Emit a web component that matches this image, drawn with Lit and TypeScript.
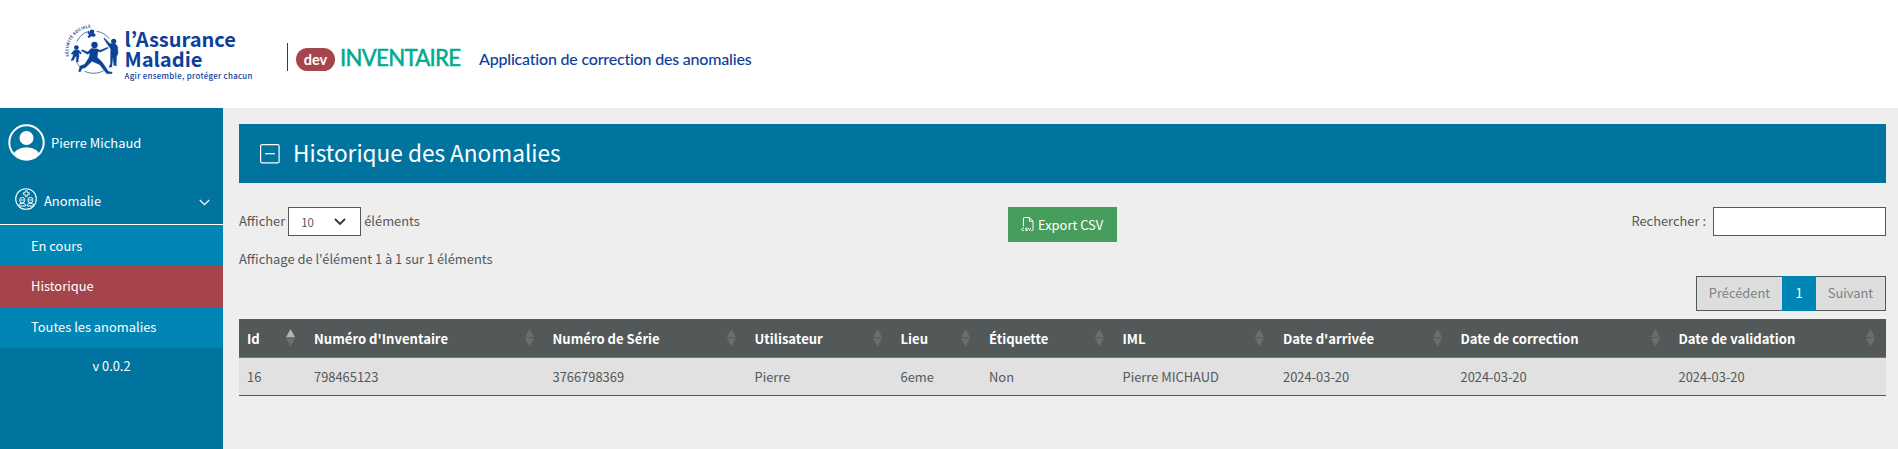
import { LitElement, html, css, svg } from "lit";
import { customElement } from "lit/decorators.js";
import { classMap } from "lit/directives/class-map.js";

const columns = [
  { label: "Id", value: "16", sorted: true },
  { label: "Numéro d'Inventaire", value: "798465123" },
  { label: "Numéro de Série", value: "3766798369" },
  { label: "Utilisateur", value: "Pierre" },
  { label: "Lieu", value: "6eme" },
  { label: "Étiquette", value: "Non" },
  { label: "IML", value: "Pierre MICHAUD" },
  { label: "Date d'arrivée", value: "2024-03-20" },
  { label: "Date de correction", value: "2024-03-20" },
  { label: "Date de validation", value: "2024-03-20" },
];

const entries = ["En cours", "Historique", "Toutes les anomalies"];

const logo = html`<svg class="logo" width="210" height="70" viewBox="60 18 210 70">
  ${svg`
  <defs><path id="arc" d="M69 56.500A23.500 23.500 0 0 1 96 28"/></defs>
  <g fill="#0c419a" font-family="Noto Sans CJK JP, sans-serif">
    <text font-size="3.900" font-weight="700"><textPath href="#arc" textLength="41">SÉCURITÉ SOCIALE</textPath></text>
    <text x="124.500" y="47.300" font-size="19.800" font-weight="700" textLength="111.500" lengthAdjust="spacingAndGlyphs">l’Assurance</text>
    <text x="124.500" y="66.700" font-size="19.800" font-weight="700" textLength="78" lengthAdjust="spacingAndGlyphs">Maladie</text>
    <text x="124.500" y="79" font-size="7.900" font-weight="500" textLength="128">Agir ensemble, protéger chacun</text>
  </g>
  <g fill="#0c419a" transform="translate(1.200 0)">
    <circle cx="90.800" cy="31.800" r="2.300"/>
    <path d="M87.300 30.800l2 2.700 3.400-.3 1.800 1.700-1.600 1.800-2.800-.6-2.300 1.900-1.200-1.200 1.400-2-1.800-2.600z" stroke="#0c419a" stroke-width=".4"/>
    <circle cx="93.300" cy="45" r="3.200"/>
    <path d="M90 48.500l5.400.2 3.600 1.500 7.600-3 .4 1.100-7.600 3.700-2.600-.4-.8 5.600 5 5 6.200 9.300 3.800.8-.4 1.400-5.200-.2-6.800-8.800-7.800-3.400-6.400 6.300-3.600 1-1.800 3.400-1.500-.6 1.300-5.400 4.800-1.800 4.200-6.600 1-4.600-2.600 1.200-6-3.500.7-1 5.600 2.200z" stroke="#0c419a" stroke-width=".4"/>
    <circle cx="112.500" cy="41.300" r="2.600"/>
    <path d="M103.200 38l5.400 5.400 5.800.6 2 2.600.4 7-1.400 2.600-.5 8 .8 1.400h-3l-.8-8.600-.9 6-.4 4-2.800.2 1.500-3.400.2-14.800-6.900-10.200z" stroke="#0c419a" stroke-width=".4"/>
    <circle cx="75.200" cy="47.600" r="2.400"/>
    <path d="M73 50.200l4.400-.2 2.800 3-.6 1.200-2-1.600.2 4-.8 3.600.2 1.600-2.200.2.400-5.400-1.400.2-1.800 3.400-2.400.4 2-4.400.6-3-1.500 1.400-.9-1z" stroke="#0c419a" stroke-width=".4"/>
  </g>
  <g fill="none" stroke="#0c419a" stroke-width=".7" transform="translate(1.200 0)">
    <path d="M75.500 41.500c2-4 6-8 10.500-9.700M95.500 31.300c5 .8 9.500 3.300 12.500 7.200M75.500 62.500c1.500 2.400 2.500 3.500 4.500 5.500M83.500 71.300c6 2.800 13 2.600 19-.6"/>
  </g>`}
</svg>`;

@customElement("app-root")
export class AppRoot extends LitElement {
  static styles = css`
    :host {
      display: flex;
      flex-direction: column;
      height: 100vh;
      overflow: hidden;
      background: #eee;
      color: #545859;
      font: 12.9px/20px "Noto Sans CJK JP", "Noto Sans CJK SC", sans-serif;
    }
    * { box-sizing: border-box; }
    svg { display: block; flex: none; }
    .header {
      display: flex;
      flex: 0 0 108px;
      background: #fff;
      padding-left: 60px;
      font-family: Lato, sans-serif;
      white-space: nowrap;
    }
    .logo { margin-top: 18px; }
    .brand {
      display: flex;
      height: 28px;
      margin: 43px 0 0 17px;
      border-left: 1px solid #0c419a;
      padding-left: 8px;
    }
    .dev {
      width: 39px;
      height: 23px;
      margin-top: 5px;
      border-radius: 12px;
      background: #a5454b;
      color: #fff;
      font: 700 14.5px/23px Lato, sans-serif;
      text-align: center;
    }
    .product {
      width: 139px;
      margin-left: 5px;
      color: #00ab8e;
      font-size: 22.2px;
      letter-spacing: -0.7px;
      -webkit-text-stroke: 0.5px #00ab8e;
      line-height: 29px;
    }
    .tagline {
      color: #0c419a;
      font-size: 16px;
      font-weight: 500;
      letter-spacing: -0.2px;
      line-height: 32px;
    }
    .body { display: flex; flex: 1; min-height: 0; }
    .side {
      flex: 0 0 223px;
      background: #00749f;
      color: #fff;
      font-size: 12.9px;
    }
    .user {
      display: flex;
      align-items: center;
      gap: 6px;
      height: 68px;
      padding-left: 8px;
    }
    .user span { padding-top: 2px; }
    .group {
      display: flex;
      align-items: center;
      height: 49px;
      padding: 0 13px 0 15px;
      border-bottom: 1px solid #fff;
    }
    .user, .group { white-space: nowrap; }
    .group span { flex: 1; padding: 2px 0 0 7px; }
    .group .people { margin-top: -2px; }
    .group .chevron { margin-top: 5px; }
    .entry {
      height: 41px;
      padding-left: 31px;
      background: #0086b5;
      line-height: 39px;
    }
    .entry:first-of-type { line-height: 41px; }
    .current { background: #a5454b; }
    .version { line-height: 35px; text-align: center; }
    .main { flex: 1; padding: 16px 12px 0 16px; min-width: 0; }
    .title {
      display: flex;
      align-items: center;
      gap: 13px;
      height: 59px;
      padding-left: 21px;
      background: #00749f;
      color: #fff;
      font-size: 22.6px;
      line-height: 56px;
    }
    .title span { padding-bottom: 2px; }
    .tools {
      display: grid;
      grid-template-columns: 769px 1fr auto;
      align-items: start;
      height: 35px;
      margin-top: 24px;
    }
    .length, .search { display: flex; align-items: center; height: 29px; gap: 3px; }
    .search { gap: 7px; }
    .length span, .search span { padding-bottom: 2px; }
    .select {
      display: flex;
      align-items: center;
      justify-content: space-between;
      width: 73px;
      height: 29px;
      padding: 0 14px 0 12px;
      border: 1px solid #545859;
      background: #fff;
      font-size: 11.4px;
    }
    .field {
      width: 173px;
      height: 29px;
      border: 1px solid #545859;
      border-radius: 0;
      padding: 0 8px;
      background: #fff;
    }
    .export {
      display: flex;
      align-items: center;
      justify-self: start;
      gap: 4px;
      width: 109px;
      height: 35px;
      padding-left: 13px;
      background: #479d5b;
      color: #fff;
      white-space: nowrap;
    }
    .info { height: 34px; line-height: 34px; }
    .pager {
      display: grid;
      grid-template-columns: 85px 34px 1fr;
      width: 190px;
      height: 35px;
      margin-left: auto;
      border: 1px solid #545859;
      background: #dcdedd;
      color: #7e8182;
      line-height: 32px;
      text-align: center;
    }
    .page { margin: -1px 0; background: #0086b5; color: #fff; line-height: 34px; }
    .row {
      display: grid;
      grid-template-columns: 67px 238.500px 202px 146px 88.500px 133.500px 160.500px 177.500px 218px 1fr;
    }
    .head {
      height: 39px;
      margin-top: 8px;
      border-bottom: 1px solid #77787b;
      background: #535858;
      color: #fff;
      font-size: 13.1px;
      font-weight: 700;
    }
    .line {
      height: 38px;
      border-bottom: 1px solid #545859;
      background: #e1e1e1;
    }
    .cell {
      display: flex;
      justify-content: space-between;
      padding: 0 11px 0 8px;
      line-height: 39px;
      white-space: nowrap;
    }
    .line .cell { line-height: 37px; }
    .sort { margin-top: 10px; fill: #6b6f70; }
    .sorted .up { fill: #b4b6b7; }
  `;

  render() {
    return html`
      <div class="header">
        ${logo}
        <div class="brand">
          <div class="dev">dev</div>
          <div class="product">INVENTAIRE</div>
          <div class="tagline">Application de correction des anomalies</div>
        </div>
      </div>
      <div class="body">
        <div class="side">
          <div class="user">
            <svg width="37" height="37" viewBox="0 0 37 37">
              <clipPath id="disc"><circle cx="18.500" cy="18.500" r="17"/></clipPath>
              <circle cx="18.500" cy="18.500" r="17.200" fill="none" stroke="#fff" stroke-width="2"/>
              <circle cx="18.500" cy="14" r="7" fill="#fff"/>
              <ellipse cx="18.500" cy="33" rx="13.500" ry="9.800" fill="#fff" clip-path="url(#disc)"/>
            </svg>
            <span>Pierre Michaud</span>
          </div>
          <div class="group">
            <svg class="people" width="22" height="22" viewBox="0 0 22 22" fill="none" stroke="#fff">
              <circle cx="11" cy="11" r="10.300" stroke-width="1.100"/>
              <path d="M10.300 2.800h2v1.800h1.900v2h-1.900v1.800h-2V6.600H8.400v-2h1.900z" stroke-width=".9"/>
              <rect x="4.800" y="9.500" width="4.800" height="5.200" rx="2" />
              <rect x="13" y="9.500" width="4.800" height="5.200" rx="2" />
              <path d="M4 18v-1.500l2-1.200h2.600l1.900 1.200V18zM12.300 18v-1.500l1.900-1.200h2.600l1.900 1.200V18zM5.500 12h3.500M13.500 12h3.500"/>
            </svg>
            <span>Anomalie</span>
            <svg class="chevron" width="11" height="7" viewBox="0 0 11 7" fill="none" stroke="#fff" stroke-width="1.200"><path d="M.8 1l4.700 4.700L10.200 1"/></svg>
          </div>
          <nav>
            ${entries.map((e) => html`<div class=${classMap({ entry: true, current: e === "Historique" })}>${e}</div>`)}
          </nav>
          <div class="version">v 0.0.2</div>
        </div>
        <div class="main">
          <div class="title">
            <svg width="20" height="20" viewBox="0 0 20 20" fill="none" stroke="#fff" stroke-width="1.200">
              <rect x=".6" y=".6" width="18.500" height="18.300" rx="1.500"/><path d="M5 9.700h10"/>
            </svg>
            <span>Historique des Anomalies</span>
          </div>
          <div class="tools">
            <div class="length">
              <span>Afficher</span>
              <div class="select">10
                <svg width="12" height="8" viewBox="0 0 12 8" fill="none" stroke="#333" stroke-width="1.800"><path d="M1 1l5 5 5-5"/></svg>
              </div>
              <span>éléments</span>
            </div>
            <div class="export">
              <svg width="13" height="15" viewBox="0 0 13 15" fill="none" stroke="#fff">
                <path d="M2.500 9.500V1.300q0-.8.8-.8h5l3.700 3.700v8.600q0 .7-.8.7h-1M8.300.5v3.700H12"/>
                <path stroke-width=".9" d="M3 11.200H1.700L.7 12v1l1 .6H3M6.400 11.200H4.700v1.200h1.500v1.200H4.400M7.300 10.900l1.200 2.700 1.200-2.700"/>
              </svg>
              Export CSV
            </div>
            <label class="search"><span>Rechercher :</span><input class="field" /></label>
          </div>
          <div class="info">Affichage de l'élément 1 à 1 sur 1 éléments</div>
          <div class="pager"><span>Précédent</span><span class="page">1</span><span>Suivant</span></div>
          <div class="row head">
            ${columns.map((c) => html`<div class=${classMap({ cell: true, sorted: !!c.sorted })}>${c.label}
              <svg class="sort" width="9" height="18" viewBox="0 0 9 18"><path class="up" d="M4.500 0L9 8.200H0z"/><path d="M0 9.200h9L4.500 17.400z"/></svg>
            </div>`)}
          </div>
          <div class="row line">${columns.map((c) => html`<div class="cell">${c.value}</div>`)}</div>
        </div>
      </div>
    `;
  }
}
